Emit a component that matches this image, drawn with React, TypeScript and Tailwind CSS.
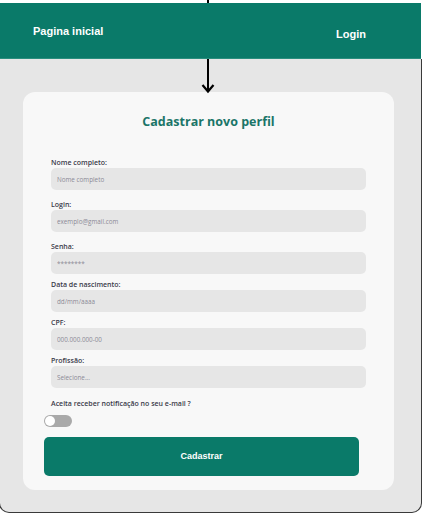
import { useState } from "react";

interface Field {
  label: string;
  placeholder: string;
  type: string;
  gap: string;
}

const fields: Field[] = [
  { label: "Nome completo:", placeholder: "Nome completo", type: "text", gap: "mt-0" },
  { label: "Login:", placeholder: "exemplo@gmail.com", type: "email", gap: "mt-[9px]" },
  { label: "Senha:", placeholder: "********", type: "password", gap: "mt-[9px]" },
  { label: "Data de nascimento:", placeholder: "dd/mm/aaaa", type: "text", gap: "mt-[5px]" },
  { label: "CPF:", placeholder: "000.000.000-00", type: "text", gap: "mt-[5px]" },
  { label: "Profissão:", placeholder: "Selecione...", type: "text", gap: "mt-[5px]" },
];

const App = () => {
  const [notify, setNotify] = useState(false);

  return (
    <div className="relative h-[513px] w-[424px] overflow-hidden bg-white font-['Open_Sans',sans-serif]">
      {/* seta do diagrama, passa por trás do cabeçalho */}
      <svg
        className="absolute left-[200px] top-0 z-10"
        width="16"
        height="94"
        viewBox="0 0 16 94"
      >
        <line x1="8" y1="0" x2="8" y2="91" stroke="#000" strokeWidth="2" />
        <polyline points="2.5,85 8,91.5 13.5,85" fill="none" stroke="#000" strokeWidth="2.2" />
      </svg>

      <header className="relative z-20 mt-[3px] flex h-[56px] w-[421px] justify-between border-b border-[#2a8e7e] bg-[#0a7a69] font-['Liberation_Sans',Arial,sans-serif] text-[11px] font-bold text-white">
        <a className="ml-[33px] mt-[21px] leading-[14px]">Pagina inicial</a>
        <a className="mr-[55px] mt-[24px] leading-[14px]">Login</a>
      </header>

      <main className="relative z-0 -ml-px h-[454px] w-[423px] rounded-b-[10px] border-x border-b border-[#3a3a3a] bg-[#e6e6e6] pt-[33px]">
        <div className="ml-[23px] w-[371px] rounded-[12px] bg-[#f8f8f8] pb-[14px] pt-[21px]">
          <h1 className="text-center text-[12.5px] font-bold leading-[18px] text-[#1b7568]">
            Cadastrar novo perfil
          </h1>

          <form className="mt-[26px] flex flex-col" onSubmit={(e) => e.preventDefault()}>
            {fields.map((f) => (
              <div key={f.label} className={`${f.gap} ml-[28px] w-[315px]`}>
                <label className="block h-[11px] text-[7px] font-semibold leading-[11px] text-[#3a3a4a]">
                  {f.label}
                </label>
                <input
                  type={f.type}
                  placeholder={f.placeholder}
                  className="block h-[22px] w-full rounded-[5px] bg-[#e6e6e6] px-[6px] text-[6.3px] outline-none placeholder:text-[#8c8a96]"
                />
              </div>
            ))}

            <p className="ml-[28px] mt-[10px] h-[11px] text-[7px] font-semibold leading-[11px] text-[#3a3a4a]">
              Aceita receber notificação no seu e-mail ?
            </p>

            <button
              type="button"
              onClick={() => setNotify(!notify)}
              className={`ml-[21px] mt-[6px] flex h-[12px] w-[28px] items-center rounded-full px-[1px] ${notify ? "justify-end bg-[#0a7a69]" : "justify-start bg-[#a9a9a9]"}`}
            >
              <span className="h-[10px] w-[10px] rounded-full bg-white" />
            </button>

            <button
              type="submit"
              className="ml-[21px] mt-[10px] h-[39px] w-[315px] rounded-[5px] bg-[#0a7a69] font-['Liberation_Sans',Arial,sans-serif] text-[9px] font-bold text-white"
            >
              Cadastrar
            </button>
          </form>
        </div>
      </main>
    </div>
  );
};

export default App;
